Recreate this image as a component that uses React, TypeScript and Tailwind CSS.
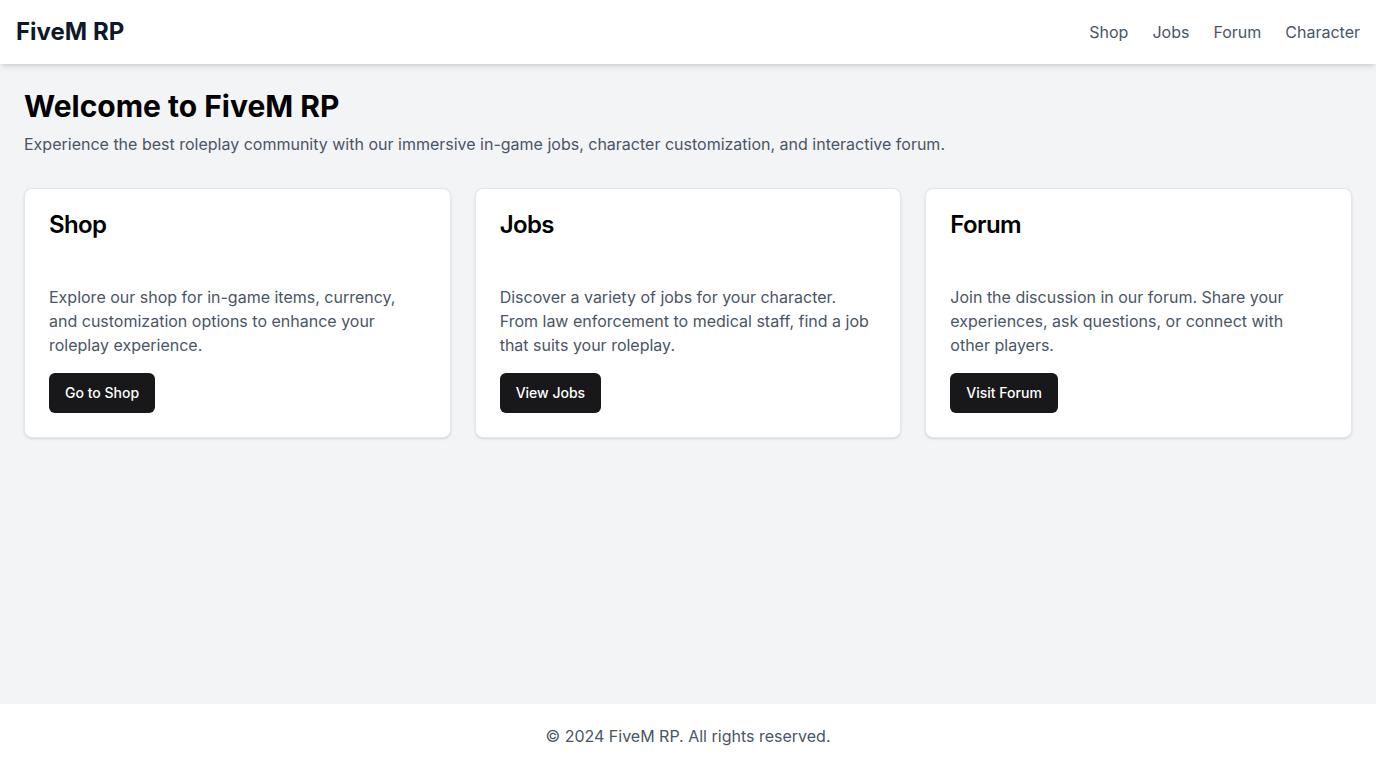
const cards = [
  {
    title: 'Shop',
    text: 'Explore our shop for in-game items, currency, and customization options to enhance your roleplay experience.',
    action: 'Go to Shop',
  },
  {
    title: 'Jobs',
    text: 'Discover a variety of jobs for your character. From law enforcement to medical staff, find a job that suits your roleplay.',
    action: 'View Jobs',
  },
  {
    title: 'Forum',
    text: 'Join the discussion in our forum. Share your experiences, ask questions, or connect with other players.',
    action: 'Visit Forum',
  },
];

const links = ['Shop', 'Jobs', 'Forum', 'Character'];

export default function App() {
  return (
    <div className="min-h-screen flex flex-col bg-gray-100 font-['Inter',sans-serif]">
      <header className="h-16 px-4 bg-white shadow-md flex items-center justify-between relative z-10">
        <h1 className="text-2xl font-bold text-gray-900">FiveM RP</h1>
        <nav className="flex gap-6">
          {links.map((link) => (
            <a key={link} href="#" className="text-gray-600 hover:text-gray-900">
              {link}
            </a>
          ))}
        </nav>
      </header>

      <main className="flex-1 p-6">
        <h2 className="text-3xl font-bold text-black mb-2">Welcome to FiveM RP</h2>
        <p className="text-gray-600 mb-8">
          Experience the best roleplay community with our immersive in-game jobs, character customization, and interactive forum.
        </p>

        <div className="grid grid-cols-3 gap-6">
          {cards.map((card) => (
            <div key={card.title} className="bg-white rounded-lg border border-gray-200 shadow-sm">
              <div className="p-6">
                <h3 className="text-2xl leading-none font-semibold text-black tracking-tight">{card.title}</h3>
              </div>
              <div className="p-6">
                <p className="text-gray-600 mb-4">{card.text}</p>
                <button className="h-10 px-4 rounded-md bg-[#18181b] text-white text-sm font-medium">
                  {card.action}
                </button>
              </div>
            </div>
          ))}
        </div>
      </main>

      <footer className="h-16 bg-white flex items-center justify-center">
        <p className="text-gray-600">© 2024 FiveM RP. All rights reserved.</p>
      </footer>
    </div>
  );
}
